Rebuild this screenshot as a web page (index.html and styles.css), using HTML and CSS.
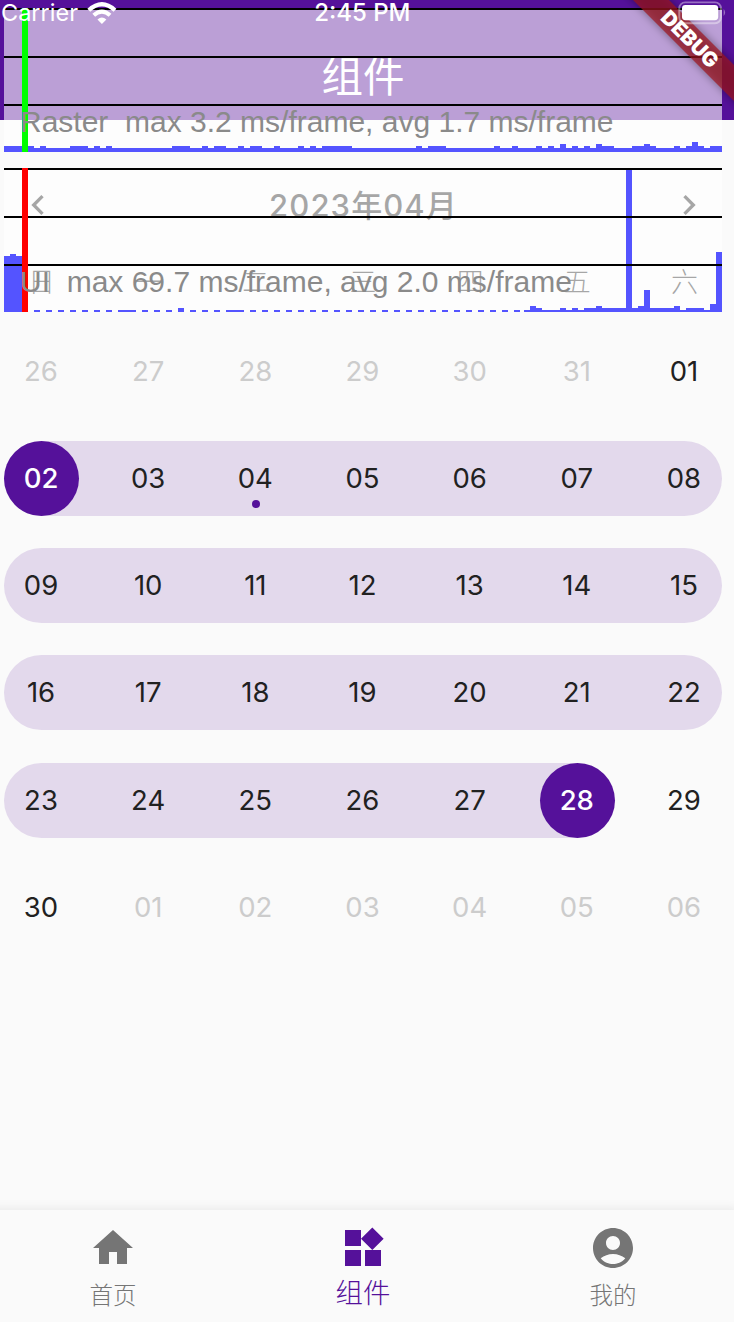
FILE: index.html
```html
<!DOCTYPE html>
<html lang="zh-CN">
<head>
<meta charset="utf-8">
<title>组件</title>
<link rel="stylesheet" href="styles.css">
</head>
<body>
<div class="app">
  <header class="app-bar"><h1 class="app-title">组件</h1></header>

  <main class="calendar">
    <div class="month-bar">
      <svg class="chevron" viewBox="0 0 24 24"><path d="M15.41 7.41L14 6l-6 6 6 6 1.41-1.41L10.83 12z"/></svg>
      <h2 class="month">2023年04月</h2>
      <svg class="chevron" viewBox="0 0 24 24"><path d="M10 6L8.59 7.41 13.17 12l-4.58 4.59L10 18l6-6z"/></svg>
    </div>
    <div class="weekdays"><span>日</span><span>一</span><span>二</span><span>三</span><span>四</span><span>五</span><span>六</span></div>
    <div class="weeks">
      <div class="week"><span class="day muted">26</span><span class="day muted">27</span><span class="day muted">28</span><span class="day muted">29</span><span class="day muted">30</span><span class="day muted">31</span><span class="day">01</span></div>
      <div class="week range"><span class="day selected">02</span><span class="day">03</span><span class="day today">04</span><span class="day">05</span><span class="day">06</span><span class="day">07</span><span class="day">08</span></div>
      <div class="week range"><span class="day">09</span><span class="day">10</span><span class="day">11</span><span class="day">12</span><span class="day">13</span><span class="day">14</span><span class="day">15</span></div>
      <div class="week range"><span class="day">16</span><span class="day">17</span><span class="day">18</span><span class="day">19</span><span class="day">20</span><span class="day">21</span><span class="day">22</span></div>
      <div class="week range range-last"><span class="day">23</span><span class="day">24</span><span class="day">25</span><span class="day">26</span><span class="day">27</span><span class="day selected">28</span><span class="day">29</span></div>
      <div class="week"><span class="day">30</span><span class="day muted">01</span><span class="day muted">02</span><span class="day muted">03</span><span class="day muted">04</span><span class="day muted">05</span><span class="day muted">06</span></div>
    </div>
  </main>

  <nav class="tabs">
    <a class="tab"><svg class="tab-icon" viewBox="0 0 24 24"><path d="M10 20v-6h4v6h5v-8h3L12 3 2 12h3v8z"/></svg><span class="tab-label">首页</span></a>
    <a class="tab active"><svg class="tab-icon" viewBox="0 0 24 24"><path d="M13 13v8h8v-8h-8zM3 21h8v-8H3v8zM3 3v8h8V3H3zm13.66-1.31L11 7.34 16.66 13l5.66-5.66-5.66-5.65z"/></svg><span class="tab-label">组件</span></a>
    <a class="tab"><svg class="tab-icon" viewBox="0 0 24 24"><path d="M12 2C6.48 2 2 6.48 2 12s4.48 10 10 10 10-4.48 10-10S17.52 2 12 2zm0 4c1.93 0 3.5 1.57 3.5 3.5S13.930 13 12 13s-3.500-1.570-3.500-3.500S10.070 6 12 6zm0 14c-2.030 0-4.430-.82-6.140-2.880C7.550 15.800 9.680 15 12 15s4.450.8 6.140 2.120C16.430 19.180 14.030 20 12 20z"/></svg><span class="tab-label">我的</span></a>
  </nav>

  <!-- Performance overlay: raster and UI thread graphs -->
  <div class="perf">
    <div class="graph">
      <svg class="plot" viewBox="4 8 718 144" shape-rendering="crispEdges">
        <path class="bars" d="M4 148H722V152H4zM4 146H34v2H4zM40 146h6v2h-6zM70 146h18v2h-18zM94 146h6v2h-6zM106 146h6v2h-6zM172 146h18v2h-18zM202 146h6v2h-6zM214 146h12v2h-12zM238 146h6v2h-6zM250 146h12v2h-12zM274 146h6v2h-6zM298 146h6v2h-6zM310 146h6v2h-6zM322 146h30v2h-30zM416 146h6v2h-6zM428 146h18v2h-18zM494 146h6v2h-6zM512 146h6v2h-6zM536 146h6v2h-6zM548 146h6v2h-6zM560 144h6v4h-6zM572 146h6v2h-6zM584 146h6v2h-6zM596 144h6v4h-6zM602 146h12v2h-12zM632 146h24v2h-24zM644 144h6v2h-6zM674 146h6v2h-6zM686 146h18v2h-18zM692 142h6v4h-6zM710 146h12v2h-12z"/>
        <path class="lines" d="M4 8h718v2H4zM4 56h718v2H4zM4 104h718v2H4z"/>
        <path class="marker-raster" d="M22 8h6v144h-6z"/>
      </svg>
      <span class="graph-label raster-label">Raster&nbsp; max 3.2 ms/frame, avg 1.7 ms/frame</span>
    </div>
    <div class="graph">
      <svg class="plot" viewBox="4 168 718 144" shape-rendering="crispEdges">
        <path class="bars" d="M4 256h6v-2h6v2h6v56H4zM118 310h18v2h-18zM178 308h6v4h-6zM226 310h18v2h-18zM524 310h198v2H524zM530 306h6v4h-6zM536 308h6v2h-6zM560 308h6v2h-6zM572 308h6v2h-6zM584 308h96v2h-96zM596 306h6v2h-6zM626 168h6v140h-6zM638 306h6v2h-6zM644 290h6v18h-6zM674 306h6v2h-6zM686 308h18v2h-18zM710 304h6v6h-6zM716 252h6v58h-6z"/>
        <path class="dashes" d="M34 311H524"/>
        <path class="lines" d="M4 168h718v2H4zM4 216h718v2H4zM4 264h718v2H4z"/>
        <path class="marker-ui" d="M22 168h6v144h-6z"/>
      </svg>
      <span class="graph-label ui-label">UI&nbsp; max 69.7 ms/frame, avg 2.0 ms/frame</span>
    </div>
  </div>

  <svg class="debug" viewBox="0 0 140 140">
    <defs><filter id="soft" x="-20%" y="-20%" width="140%" height="140%"><feGaussianBlur stdDeviation="5"/></filter></defs>
    <path class="debug-shadow" d="M25 -14H61L170 95V131z" filter="url(#soft)"/>
    <path class="debug-band" d="M39 0H75L140 65V101z"/>
    <text class="debug-text" transform="translate(96 39) rotate(45)" text-anchor="middle" y="7.300">DEBUG</text>
  </svg>

  <div class="status">
    <span class="carrier">Carrier</span>
    <svg class="wifi" viewBox="0 0 30 24"><path class="wifi-arc" d="M1.800 9.200Q15-2.800 28.200 9.200M6.800 14.300Q15 7 23.200 14.300"/><path class="wifi-dot" d="M15 23l-4.500-4.500Q15 14.800 19.500 18.500z"/></svg>
    <span class="time">2:45 PM</span>
    <svg class="battery" viewBox="0 0 50 24"><rect class="battery-shell" x="1.300" y="1.300" width="42" height="21" rx="6"/><rect class="battery-fill" x="4" y="4" width="36.500" height="15.300" rx="3.500"/><path class="battery-cap" d="M46 8q3 3.500 0 7z"/></svg>
  </div>
</div>
</body>
</html>
```

FILE: styles.css
```css
* { box-sizing: border-box; }

body {
  margin: 0;
  overflow: hidden;
  background: #fafafa;
  font-family: Inter, "Noto Sans CJK SC", sans-serif;
}

/* The 750px screen is centred on x = 363 of the window */
.app {
  position: relative;
  display: flex;
  flex-direction: column;
  width: 750px;
  height: 1322px;
  margin-left: -12px;
  color: #212121;
}

.app-bar {
  display: flex;
  justify-content: center;
  height: 120px;
  padding-top: 47px;
  background: #55119a;
  color: #fff;
}

.app-title {
  margin: 0;
  font-size: 41.500px;
  line-height: 60px;
  font-weight: 400;
}

.calendar { flex: 1; padding: 60px 16px 0; }

.month-bar {
  display: flex;
  align-items: center;
  justify-content: space-between;
  height: 50px;
  padding: 0 13px 0 14px;
}

.chevron { width: 40px; height: 40px; fill: #212121; }

.month {
  margin: 0;
  padding-top: 2px;
  font-size: 31px;
  line-height: 46px;
  font-weight: 500;
  letter-spacing: 1.100px;
}

.weekdays, .week {
  display: grid;
  grid-template-columns: repeat(7, 75px);
  justify-content: space-between;
  text-align: center;
}

.weekdays {
  margin-top: 33px;
  font-size: 27px;
  line-height: 40px;
  font-weight: 300;
}

.weeks {
  display: flex;
  flex-direction: column;
  gap: 32.150px;
  margin-top: 31px;
}

.week { position: relative; height: 75px; }

.range::before {
  content: "";
  position: absolute;
  inset: 0;
  border-radius: 38px;
  background: #e3d9ec;
}

.range-last::before { right: 144px; border-radius: 38px 0 0 38px; }

.day {
  position: relative;
  font-size: 27.500px;
  line-height: 75px;
  height: 75px;
  padding-right: 1px;
}

.muted { color: #ccc; }

.selected {
  border-radius: 50%;
  background: #55119a;
  color: #fff;
  font-weight: 450;
}

.today::after {
  content: "";
  position: absolute;
  left: 34px;
  top: 59px;
  width: 8px;
  height: 8px;
  border-radius: 50%;
  background: #55119a;
}

.tabs {
  display: flex;
  height: 112px;
  background: #fafafa;
  box-shadow: 0 -1px 10px rgba(0, 0, 0, .08);
  color: #757575;
}

.tab {
  flex: 1;
  display: flex;
  flex-direction: column;
  align-items: center;
  padding-top: 14px;
}

.tab-icon { width: 48px; height: 48px; fill: currentColor; }

.tab-label {
  margin-top: 6px;
  font-size: 23.500px;
  line-height: 36px;
  font-weight: 300;
}

.active { color: #55119a; }
.active .tab-label { margin-top: 3px; font-size: 27.500px; }

.perf {
  position: absolute;
  left: 16px;
  top: 8px;
  display: flex;
  flex-direction: column;
  gap: 16px;
  width: 718px;
}

.graph { position: relative; height: 144px; background: rgba(255, 255, 255, .6); }
.plot { display: block; width: 718px; height: 144px; }
.bars { fill: #5454ff; }
.dashes { stroke: #5454ff; stroke-width: 2; stroke-dasharray: 6; }
.lines { fill: #000; }
.marker-raster { fill: #0f0; }
.marker-ui { fill: #f00; }

.graph-label {
  position: absolute;
  left: 16px;
  top: 97px;
  font-family: "Liberation Sans", Arial, sans-serif;
  font-size: 30px;
  line-height: 34px;
  white-space: nowrap;
  color: #8a8a8a;
}

.debug {
  position: absolute;
  right: 4px;
  top: 0;
  width: 140px;
  height: 140px;
}

.debug-shadow { fill: rgba(0, 0, 0, .4); }
.debug-band { fill: rgba(160, 20, 30, .7); }
.debug-text { fill: #fff; font: 900 20.500px Inter, sans-serif; }

.status {
  position: absolute;
  left: 13px;
  top: 0;
  display: flex;
  align-items: center;
  width: 727px;
  height: 25px;
  color: #fff;
  font-size: 24px;
  line-height: 25px;
  white-space: nowrap;
}

.carrier { width: 87px; font-size: 23.500px; }
.wifi { width: 30px; height: 24px; }
.wifi-arc { fill: none; stroke: #fff; stroke-width: 4.200; }
.wifi-dot { fill: #fff; }
.time { width: 98px; margin-left: 197px; font-weight: 500; }
.battery { width: 50px; height: 24px; margin-left: 267px; }
.battery-shell { fill: none; stroke: rgba(255, 255, 255, .4); stroke-width: 2; }
.battery-fill { fill: #fff; }
.battery-cap { fill: rgba(255, 255, 255, .4); }
```
